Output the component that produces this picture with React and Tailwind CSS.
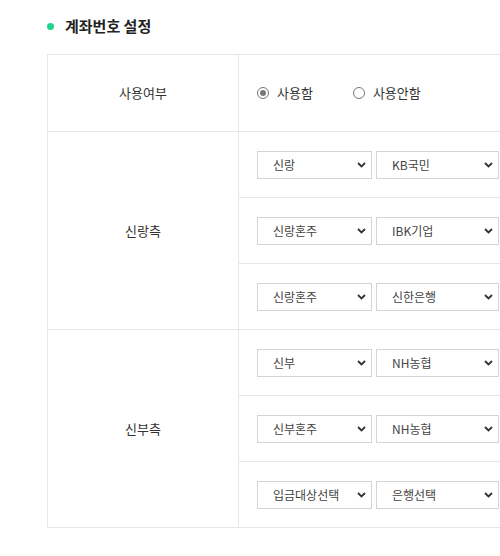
// 계좌번호 설정 — 신랑/신부측 계좌 선택 표
const FONT = { fontFamily: '"Noto Sans CJK KR", "Noto Sans", sans-serif' }

const GROUPS = [
  {
    label: "신랑측",
    rows: [
      ["신랑", "KB국민"],
      ["신랑혼주", "IBK기업"],
      ["신랑혼주", "신한은행"],
    ],
  },
  {
    label: "신부측",
    rows: [
      ["신부", "NH농협"],
      ["신부혼주", "NH농협"],
      ["입금대상선택", "은행선택"],
    ],
  },
]

function Chevron() {
  return (
    <svg width="9" height="6" viewBox="0 0 9 6" className="shrink-0">
      <path d="M1 1 L4.5 4.5 L8 1" fill="none" stroke="#333" strokeWidth="1.8" />
    </svg>
  )
}

function FakeSelect({ value, className = "" }) {
  return (
    <div
      className={`h-[28px] flex items-center justify-between pl-[15px] pr-[5px] border border-[#d4d4d4] bg-white text-[12px] text-[#444] ${className}`}
    >
      <span>{value}</span>
      <Chevron />
    </div>
  )
}

function Radio({ checked, label, className = "" }) {
  return (
    <label className={`flex items-center gap-[8px] ${className}`}>
      <span className="w-[12px] h-[12px] rounded-full border border-[#777] flex items-center justify-center bg-white">
        {checked && <span className="w-[6px] h-[6px] rounded-full bg-[#777]" />}
      </span>
      <span className="text-[13px] text-[#333]">{label}</span>
    </label>
  )
}

export default function App() {
  return (
    <div className="w-[500px] h-[556px] overflow-hidden bg-white" style={FONT}>
      <div className="pl-[47px] pt-[16px]">
        <div className="flex items-center gap-[11px] h-[20px]">
          <span className="w-[7px] h-[7px] rounded-full bg-[#1fd48e]" />
          <h2 className="text-[15px] font-bold text-[#222]">계좌번호 설정</h2>
        </div>

        <div className="mt-[18px] w-[470px] border-t border-l border-[#e6e6e6]">
          <div className="flex h-[77px] border-b border-[#e6e6e6]">
            <div className="w-[191px] border-r border-[#e6e6e6] flex items-center justify-center text-[13px] text-[#333]">
              사용여부
            </div>
            <div className="flex-1 flex items-center pl-[18px]">
              <Radio checked label="사용함" />
              <Radio label="사용안함" className="ml-[40px]" />
            </div>
          </div>

          {GROUPS.map(g => (
            <div key={g.label} className="flex border-b border-[#e6e6e6]">
              <div className="w-[191px] border-r border-[#e6e6e6] flex items-center justify-center text-[13px] text-[#333]">
                {g.label}
              </div>
              <div className="flex-1">
                {g.rows.map(([who, bank], i) => (
                  <div
                    key={i}
                    className={`flex items-center pl-[18px] ${i < g.rows.length - 1 ? "h-[66px] border-b border-[#e6e6e6]" : "h-[65px]"}`}
                  >
                    <FakeSelect value={who} className="w-[115px]" />
                    <FakeSelect value={bank} className="w-[123px] ml-[4px]" />
                  </div>
                ))}
              </div>
            </div>
          ))}
        </div>
      </div>
    </div>
  )
}
